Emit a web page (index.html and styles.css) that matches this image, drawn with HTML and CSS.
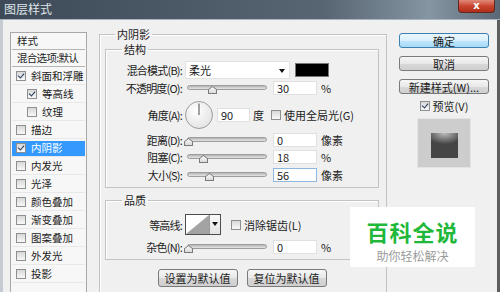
FILE: index.html
```html
<!DOCTYPE html>
<html lang="zh-CN">
<head>
    <meta charset="UTF-8">
    <title>图层样式</title>
    <link rel="stylesheet" href="styles.css">
</head>
<body>
<div class="window">
    <div class="titlebar">
        <span class="title">图层样式</span>
        <span class="close">x</span>
    </div>
    <div class="body">
        <ul class="style-list">
            <li class="head">样式</li>
            <li class="blend">混合选项:默认</li>
            <li><span class="cb on"></span>斜面和浮雕</li>
            <li class="sub"><span class="cb on"></span>等高线</li>
            <li class="sub"><span class="cb"></span>纹理</li>
            <li><span class="cb"></span>描边</li>
            <li class="sel"><span class="cb on"></span>内阴影</li>
            <li><span class="cb"></span>内发光</li>
            <li><span class="cb"></span>光泽</li>
            <li><span class="cb"></span>颜色叠加</li>
            <li><span class="cb"></span>渐变叠加</li>
            <li><span class="cb"></span>图案叠加</li>
            <li><span class="cb"></span>外发光</li>
            <li><span class="cb"></span>投影</li>
        </ul>

        <fieldset class="group outer">
            <legend>内阴影</legend>

            <fieldset class="group inner">
                <legend>结构</legend>
                <div class="row r-blend">
                    <span class="lbl">混合模式(B):</span>
                    <span class="select">柔光<i class="arrow"></i></span>
                    <span class="swatch"></span>
                </div>
                <div class="row r-opacity">
                    <span class="lbl">不透明度(O):</span>
                    <span class="slider"><i class="track"></i><i class="thumb" style="left: 21px"></i></span>
                    <span class="field">30</span>
                    <span class="unit">%</span>
                </div>
                <div class="row r-angle">
                    <span class="lbl">角度(A):</span>
                    <svg class="dial" width="28" height="28" viewBox="0 0 28 28">
                        <defs>
                            <radialGradient id="dialbg" cx="0.4" cy="0.35" r="0.7">
                                <stop offset="0" stop-color="#ffffff"/>
                                <stop offset="1" stop-color="#e2e2e2"/>
                            </radialGradient>
                        </defs>
                        <circle cx="14" cy="14" r="13.5" fill="url(#dialbg)" stroke="#9c9c9c"/>
                        <line x1="14" y1="14" x2="14" y2="2.5" stroke="#4a4a4a" stroke-width="1"/>
                    </svg>
                    <span class="field angle">90</span>
                    <span class="unit">度</span>
                    <span class="cb global"></span>
                    <span class="cb-text">使用全局光(G)</span>
                </div>
                <div class="row r-distance">
                    <span class="lbl">距离(D):</span>
                    <span class="slider"><i class="track"></i><i class="thumb" style="left: -3px"></i></span>
                    <span class="field">0</span>
                    <span class="unit">像素</span>
                </div>
                <div class="row r-choke">
                    <span class="lbl">阻塞(C):</span>
                    <span class="slider"><i class="track"></i><i class="thumb" style="left: 12px"></i></span>
                    <span class="field">18</span>
                    <span class="unit">%</span>
                </div>
                <div class="row r-size">
                    <span class="lbl">大小(S):</span>
                    <span class="slider"><i class="track"></i><i class="thumb" style="left: 18px"></i></span>
                    <span class="field focus">56</span>
                    <span class="unit">像素</span>
                </div>
            </fieldset>

            <fieldset class="group quality">
                <legend>品质</legend>
                <div class="row r-contour">
                    <span class="lbl">等高线:</span>
                    <span class="contour">
                        <svg width="23" height="19" viewBox="0 0 23 19">
                            <rect width="23" height="19" fill="#fff"/>
                            <polygon points="0,19 23,0 23,19" fill="#a3a3a3"/>
                        </svg>
                        <span class="contour-drop"><i class="arrow"></i></span>
                    </span>
                    <span class="cb antialias"></span>
                    <span class="cb-text">消除锯齿(L)</span>
                </div>
                <div class="row r-noise">
                    <span class="lbl">杂色(N):</span>
                    <span class="slider"><i class="track"></i><i class="thumb" style="left: -3px"></i></span>
                    <span class="field">0</span>
                    <span class="unit">%</span>
                </div>
            </fieldset>

            <div class="btn-row">
                <span class="btn">设置为默认值</span>
                <span class="btn">复位为默认值</span>
            </div>
        </fieldset>

        <div class="side">
            <span class="btn default">确定</span>
            <span class="btn">取消</span>
            <span class="btn">新建样式(W)...</span>
            <div class="preview-check"><span class="cb on"></span>预览(V)</div>
            <div class="preview"><div class="preview-tile"></div></div>
        </div>
    </div>

    <div class="watermark">
        <div class="wm-title">百科全说</div>
        <div class="wm-sub">助你轻松解决</div>
    </div>
</div>
</body>
</html>
```

FILE: styles.css
```css
body { margin: 0; font-family: "Noto Sans CJK SC", "Noto Sans", sans-serif; font-size: 11px; color: #1c1c1c; }
.window { position: relative; width: 500px; height: 292px; overflow: hidden; background: #f0f0f0; }

/* title bar */
.titlebar { display: flex; justify-content: space-between; align-items: flex-start; height: 19px; border-bottom: 1px solid #aab4bc; background: linear-gradient(90deg, #3e4a57 0%, #4b5865 35%, #586673 65%, #8595a1 86%, #5a6875 100%); }
.title { padding-left: 4px; color: #dfe4e8; font-size: 12px; line-height: 18px; }
.close { width: 35px; height: 12px; margin-right: 5px; border: 1px solid #5c2a22; border-top: none; border-radius: 0 0 4px 4px; background: linear-gradient(#e18a7c, #c9452f 50%, #b02e1b); color: #fff; font: bold 10px/11px "DejaVu Sans", sans-serif; text-align: center; }

/* dialog body */
.body { display: flex; align-items: flex-start; height: 272px; padding: 8px 0 0 7px; border-left: 3px solid #c5cbd1; border-right: 3px solid #5e5e5e; box-sizing: border-box; }

/* style list */
.style-list { width: 77px; height: 270px; margin: 4px 0 0; padding: 0 1px; list-style: none; box-sizing: border-box; border: 1px solid #a8a8a8; background: #f7f7f7; overflow: hidden; }
.style-list li { display: flex; align-items: center; height: 18px; padding-left: 4px; box-sizing: border-box; border-bottom: 1px solid #e8e8e8; font-size: 10.5px; line-height: 16px; white-space: nowrap; }
.style-list li.head { height: 17px; padding-left: 5px; border-bottom-color: #b4b4b4; }
.style-list li.blend { height: 17px; padding-left: 5px; border-bottom-color: #b4b4b4; letter-spacing: -0.7px; }
.style-list li.sub { padding-left: 15px; }
.style-list li.sel { background: linear-gradient(transparent 2px, #3399ff 2px, #3399ff 17px, transparent 17px); color: #fff; }
.style-list .cb { margin-right: 5px; }

/* checkboxes */
.cb { position: relative; flex: none; width: 8px; height: 8px; border: 1px solid #8e8f8f; background: linear-gradient(#d8d8d8, #f8f8f8); }
.cb.on::after { content: ""; position: absolute; left: 2px; top: 0; width: 3px; height: 5px; border: solid #25395a; border-width: 0 1px 1px 0; transform: rotate(40deg); }
.cb-text { margin-left: 3px; white-space: nowrap; }

/* group boxes */
.group { margin: 0; border: 1px solid #c3c3c3; box-shadow: inset 1px 1px 0 #fff; min-width: 0; }
.group legend { padding: 0 2px; font-size: 11px; line-height: 13px; }
.outer { width: 288px; height: 280px; margin-left: 12px; padding: 0 7px 0 5px; box-sizing: border-box; border-bottom: none; }
.outer > legend { margin-left: 10px; }
.inner, .quality { width: 274px; padding: 0 0 5px; box-sizing: border-box; }
.inner { margin-top: 2px; }
.quality { margin-top: 6px; }
.inner > legend, .quality > legend { margin-left: 16px; }

/* rows */
.row { display: flex; align-items: center; line-height: 14px; }
.lbl { flex: none; width: 79px; padding-right: 3px; box-sizing: border-box; text-align: right; letter-spacing: -0.8px; white-space: nowrap; }
.r-blend { height: 18px; margin-top: 5px; }
.r-opacity { height: 14px; margin-top: 2px; }
.r-angle { height: 28px; margin-top: 6px; }
.r-distance { height: 14px; margin-top: 4px; }
.r-choke { height: 14px; margin-top: 3px; }
.r-size { height: 14px; margin-top: 4px; }
.r-contour { height: 21px; margin-top: 7px; }
.r-noise { height: 14px; margin-top: 5px; }

.select { position: relative; display: flex; align-items: center; width: 105px; height: 18px; padding-left: 3px; box-sizing: border-box; border: 1px solid #e2e2e2; background: #fff; }
.arrow { position: absolute; width: 0; height: 0; border-left: 3px solid transparent; border-right: 3px solid transparent; border-top: 4px solid #111; }
.select .arrow { right: 4px; top: 7px; }
.swatch { width: 34px; height: 14px; margin-left: 5px; box-sizing: border-box; border: 1px solid #777; background: #000; }

.slider { position: relative; flex: none; width: 80px; height: 14px; margin-left: 2px; }
.track { position: absolute; left: 0; right: 0; top: 4px; height: 3px; border: 1px solid #9d9d9d; border-radius: 3px; background: linear-gradient(#b4b4b4, #e6e6e6); }
.thumb { position: absolute; top: 5px; width: 9px; height: 8px; background: #7a7a7a; clip-path: polygon(50% 0, 100% 45%, 100% 100%, 0 100%, 0 45%); }
.thumb::after { content: ""; position: absolute; left: 1px; top: 1px; right: 1px; bottom: 1px; background: linear-gradient(#fcfcfc, #d9d9d9); clip-path: polygon(50% 0, 100% 45%, 100% 100%, 0 100%, 0 45%); }

.field { display: flex; align-items: center; flex: none; width: 44px; height: 14px; margin-left: 6px; padding-left: 3px; box-sizing: border-box; border: 1px solid #e0e0e0; background: #fff; }
.field.angle { width: 33px; margin-left: 4px; }
.field.focus { border-color: #8fb8e0; }
.unit { margin-left: 4px; white-space: nowrap; }
.dial { flex: none; }
.r-angle .unit { margin-left: 3px; }
.cb.global { margin-left: 7px; }

.contour { display: flex; height: 21px; box-sizing: border-box; border: 1px solid #4d4d4d; }
.contour-drop { position: relative; width: 10px; border-left: 1px solid #9a9a9a; background: linear-gradient(#fafafa, #e2e2e2); }
.contour-drop .arrow { left: 2px; top: 7px; }
.cb.antialias { margin-left: 10px; }

/* buttons */
.btn { display: flex; justify-content: center; align-items: center; height: 18px; box-sizing: border-box; border: 1px solid #7a7a7a; border-radius: 3px; background: linear-gradient(#f6f6f6 0%, #e8e8e8 50%, #d8d8d8 51%, #cfcfcf 100%); font-size: 11px; line-height: 14px; white-space: nowrap; }
.btn-row { display: flex; justify-content: center; gap: 9px; margin-top: 9px; }
.btn-row .btn { width: 80px; }

/* right column */
.side { display: flex; flex-direction: column; width: 90px; margin: 5px 0 0 12px; }
.side .btn { height: 15px; margin-bottom: 8px; }
.side .btn.default { border-color: #3c7fb1; background: linear-gradient(#eaf6fd 0%, #d9f0fc 50%, #bee6fd 51%, #a7d9f5 100%); }
.preview-check { display: flex; align-items: center; justify-content: center; height: 12px; margin-top: -2px; line-height: 12px; }
.preview-check .cb { margin-right: 3px; }
.preview { width: 54px; height: 50px; margin: 6px 0 0 18px; padding: 14px 0 0 13px; box-sizing: border-box; border: 1px solid #e4e4e4; background: #cdcdcd; }
.preview-tile { width: 27px; height: 25px; background: radial-gradient(ellipse 70% 45% at 50% 0, #bdbdbd 0%, #7a7a7a 55%, transparent 100%), #454545; }

/* watermark overlay */
.watermark { position: absolute; left: 350px; top: 207px; width: 125px; height: 60px; padding-top: 9px; box-sizing: border-box; background: #fff; text-align: center; }
.wm-title { color: #1fb83a; font-size: 22px; font-weight: bold; line-height: 30px; letter-spacing: 1px; }
.wm-sub { margin-top: 3px; color: #9b9b9b; font-size: 12px; line-height: 14px; }
```
